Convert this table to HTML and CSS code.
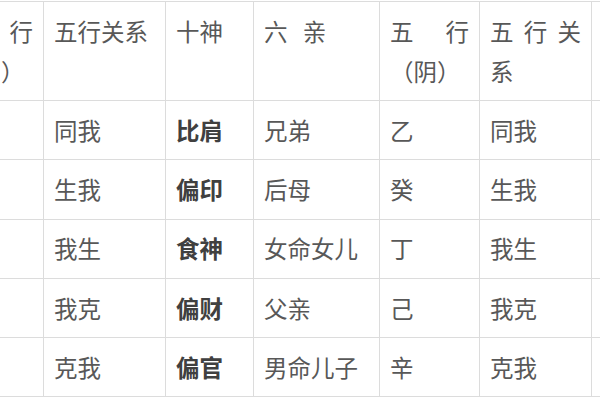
FILE: index.html
```html
<!DOCTYPE html>
<html lang="zh-CN">
<head>
<meta charset="utf-8">
<title>五行十神六亲表</title>
<link rel="stylesheet" href="styles.css">
</head>
<body>
<table class="wx">
  <colgroup>
    <col class="c-yang">
    <col class="c-rel">
    <col class="c-god">
    <col class="c-kin">
    <col class="c-yin">
    <col class="c-rel2">
    <col class="c-god2">
  </colgroup>
  <thead>
    <tr>
      <th>五行（阳）</th>
      <th>五行关系</th>
      <th>十神</th>
      <th class="kin-head">六 亲</th>
      <th>五行（阴）</th>
      <th>五行关系</th>
      <th>十神</th>
    </tr>
  </thead>
  <tbody>
    <tr><td>甲</td><td>同我</td><td class="god">比肩</td><td>兄弟</td><td>乙</td><td>同我</td><td class="god">劫财</td></tr>
    <tr><td>壬</td><td>生我</td><td class="god">偏印</td><td>后母</td><td>癸</td><td>生我</td><td class="god">正印</td></tr>
    <tr><td>丙</td><td>我生</td><td class="god">食神</td><td>女命女儿</td><td>丁</td><td>我生</td><td class="god">伤官</td></tr>
    <tr><td>戊</td><td>我克</td><td class="god">偏财</td><td>父亲</td><td>己</td><td>我克</td><td class="god">正财</td></tr>
    <tr><td>庚</td><td>克我</td><td class="god">偏官</td><td>男命儿子</td><td>辛</td><td>克我</td><td class="god">正官</td></tr>
  </tbody>
</table>
</body>
</html>
```

FILE: styles.css
```css
html, body {
  margin: 0;
  padding: 0;
  background: #ffffff;
  overflow: hidden;
}

body {
  width: 600px;
  height: 400px;
  font-family: "Microsoft YaHei", "Noto Sans CJK SC", "Noto Sans", sans-serif;
}

.wx {
  border-collapse: collapse;
  table-layout: fixed;
  width: 748px;
  margin-top: 1px;
  margin-left: -57px;
  color: #585858;
  font-size: 23.5px;
}

.c-yang { width: 100px; }
.c-rel { width: 122px; }
.c-god { width: 88px; }
.c-kin { width: 126px; }
.c-yin { width: 100px; }
.c-rel2 { width: 112px; }
.c-god2 { width: 100px; }

.wx th,
.wx td {
  border: 1px solid #dcdcdc;
  padding: 8.9px 10px;
  line-height: 40.5px;
  text-align: justify;
  vertical-align: middle;
  font-weight: normal;
  word-break: break-all;
}

.wx th {
  padding-top: 8.5px;
  padding-bottom: 8.5px;
  vertical-align: top;
}

.wx .kin-head {
  word-spacing: 10px;
}

.wx .god {
  font-weight: bold;
  color: #404040;
}
```
